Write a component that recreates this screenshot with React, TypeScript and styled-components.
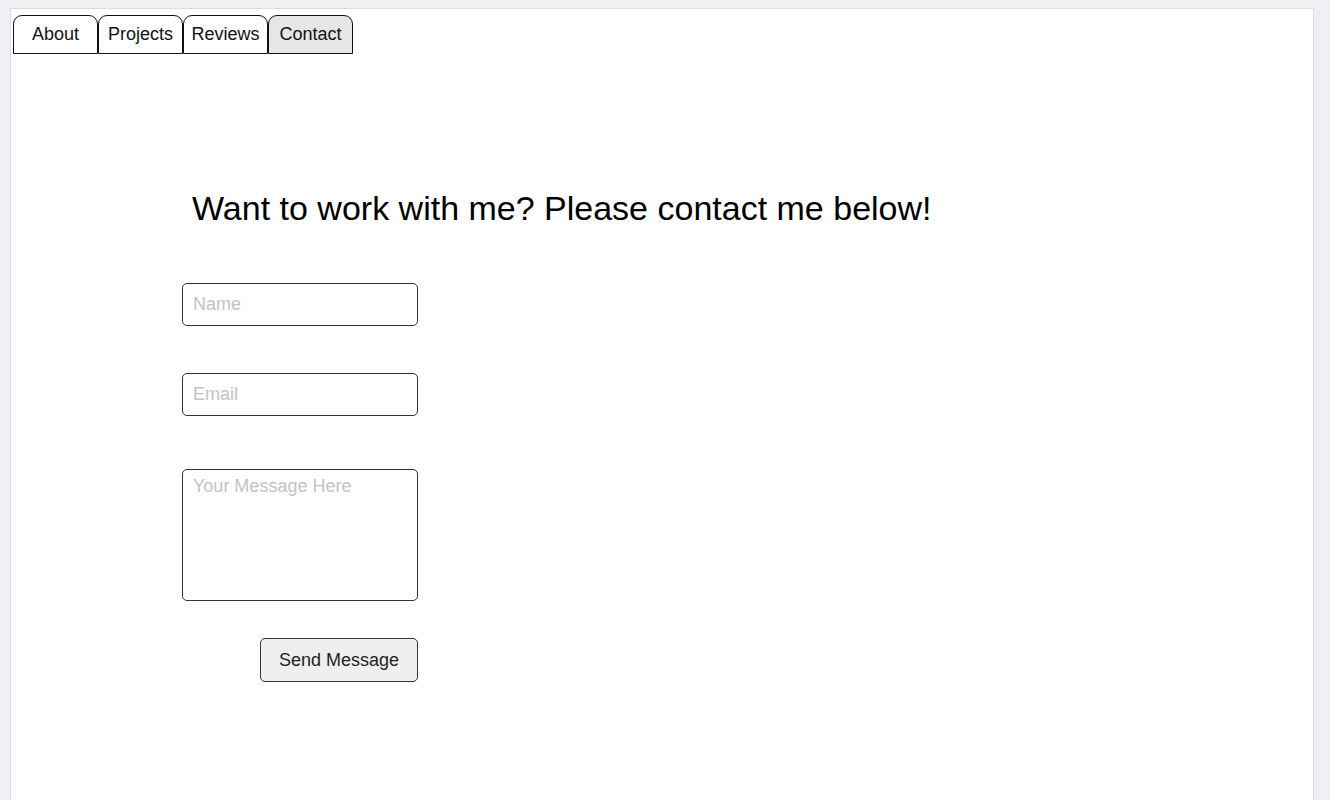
import React from "react";
import styled, { createGlobalStyle } from "styled-components";

const Global = createGlobalStyle`
  html, body { margin: 0; padding: 0; }
  body {
    background: #eff0f4;
    font-family: "Liberation Sans", Arial, sans-serif;
    color: #000;
  }
`;

const Page = styled.div`
  padding: 8px 16px 0 10px;
  min-height: 800px;
  box-sizing: border-box;
`;

const Panel = styled.div`
  background: #fff;
  border: 1px solid #dcdde1;
  border-bottom: none;
  min-height: 792px;
  box-sizing: border-box;
  padding: 6px 0 0 2px;
`;

const TabBar = styled.nav`
  display: flex;
`;

const Tab = styled.button<{ $active?: boolean }>`
  width: 85px;
  height: 39px;
  box-sizing: border-box;
  border: 1px solid #111;
  border-radius: 9px 9px 0 0;
  background: ${(p) => (p.$active ? "#e6e6e6" : "#fff")};
  font-family: "Liberation Sans", Arial, sans-serif;
  font-size: 18px;
  color: #111;
  padding: 0;
  cursor: pointer;
`;

const Content = styled.section`
  padding: 134px 0 0 169px;
`;

const Heading = styled.h1`
  margin: 0 0 54px 10px;
  font-size: 34px;
  font-weight: 400;
  line-height: 41px;
`;

const Form = styled.form`
  width: 236px;
  display: flex;
  flex-direction: column;
`;

const Field = styled.input`
  height: 43px;
  box-sizing: border-box;
  border: 1px solid #333;
  border-radius: 5px;
  padding: 0 10px;
  font-family: "Liberation Sans", Arial, sans-serif;
  font-size: 18px;
  &::placeholder { color: #c3c3c3; }
`;

const Message = styled.textarea`
  height: 132px;
  box-sizing: border-box;
  border: 1px solid #333;
  border-radius: 5px;
  padding: 6px 10px;
  font-family: "Liberation Sans", Arial, sans-serif;
  font-size: 18px;
  resize: none;
  &::placeholder { color: #c3c3c3; }
`;

const Gap = styled.div<{ $h: number }>`
  height: ${(p) => p.$h}px;
`;

const Send = styled.button`
  align-self: flex-end;
  width: 158px;
  height: 44px;
  box-sizing: border-box;
  border: 1px solid #333;
  border-radius: 5px;
  background: #efefef;
  font-family: "Liberation Sans", Arial, sans-serif;
  font-size: 18px;
  color: #222;
  cursor: pointer;
`;

export default function App() {
  return (
    <>
      <Global />
      <Page>
        <Panel>
          <TabBar>
            <Tab>About</Tab>
            <Tab>Projects</Tab>
            <Tab>Reviews</Tab>
            <Tab $active>Contact</Tab>
          </TabBar>
          <Content>
            <Heading>Want to work with me? Please contact me below!</Heading>
            <Form onSubmit={(e) => e.preventDefault()}>
              <Field placeholder="Name" />
              <Gap $h={47} />
              <Field placeholder="Email" />
              <Gap $h={53} />
              <Message placeholder="Your Message Here" />
              <Gap $h={37} />
              <Send type="submit">Send Message</Send>
            </Form>
          </Content>
        </Panel>
      </Page>
    </>
  );
}
